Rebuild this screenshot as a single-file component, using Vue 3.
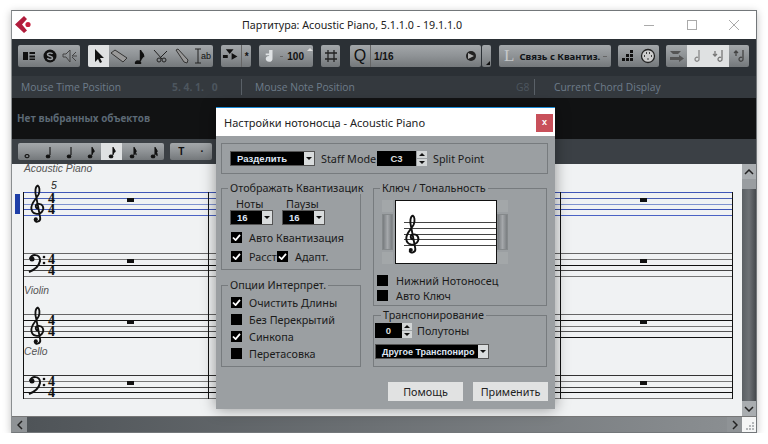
<script setup>
const blue = ['#3f56b8', '#4a5fb5', '#7f92cf', '#3f56b8', '#4a62c4']
const staves = [
  { clef: 'treble', lines: blue, label: 'Acoustic Piano', active: true },
  { clef: 'bass', lines: ['#666', '#777', '#111', '#444', '#777'], label: '' },
  { clef: 'treble', lines: ['#666', '#111', '#777', '#555', '#111'], label: 'Violin' },
  { clef: 'bass', lines: ['#333', '#777', '#444', '#111', '#777'], label: 'Cello' },
]
const notes = ['M5 9.5a2 1.6 0 1 0 .1 0z', 'M5 10a1.8 1.4 0 1 0 .1 0M7 10V2', 'M5 10a1.8 1.4 0 1 0 .1 0M7 10V2', 'M5 10a1.8 1.4 0 1 0 .1 0M7 10V2c0 2 3 3 2 5', 'M5 10a1.8 1.4 0 1 0 .1 0M7 10V2c0 2 3 3 2 5', 'M5 10a1.8 1.4 0 1 0 .1 0M7 10V2c0 2 3 3 2 5M7 5c0 2 3 3 2 5', 'M5 10a1.8 1.4 0 1 0 .1 0M7 10V2c0 2 3 3 2 5M7 5c0 2 3 3 2 5M7 7c0 2 3 2 2 4']
const interp = [
  { text: 'Очистить Длины', on: true },
  { text: 'Без Перекрытий', on: false },
  { text: 'Синкопа', on: true },
  { text: 'Перетасовка', on: false },
]
</script>

<template>
  <div class="window">
    <div class="titlebar">
      <svg class="logo" width="20" height="20" viewBox="0 0 20 20">
        <path d="M10 1L1 9.5 10 18l3-2.5-5-6 5-5.500z" fill="#b01c3c" />
        <circle cx="14" cy="9.500" r="2.600" fill="#c5203f" />
      </svg>
      <span class="wintitle">Партитура: Acoustic Piano, 5.1.1.0 - 19.1.1.0</span>
      <div class="caption">
        <svg width="12" height="12" viewBox="0 0 12 12"><path d="M1 6.500h10" stroke="#aaa" /></svg>
        <svg width="12" height="12" viewBox="0 0 12 12"><rect x="1.500" y="1.500" width="9" height="9" fill="none" stroke="#aaa" /></svg>
        <svg width="12" height="12" viewBox="0 0 12 12"><path d="M1 1l10 10M11 1L1 11" stroke="#aaa" /></svg>
      </div>
    </div>

    <div class="toolbar">
      <div class="tgroup" style="width: 62px">
        <svg class="ic" width="18" height="14" viewBox="0 0 18 14"><path d="M3 3h5v8H3zM9.500 3H15v2H9.500zM9.500 6.500H15v2H9.500zM9.500 9.500H15V11H9.500z" fill="#111" /></svg>
        <svg class="ic" width="16" height="16" viewBox="0 0 16 16"><circle cx="8" cy="8" r="6.500" fill="#111" /><path d="M10.500 6C10 4.500 5.500 4.500 5.500 6.500S10.500 8 10.500 10 6 12 5.500 10" stroke="#9a9ea2" stroke-width="1.500" fill="none" /></svg>
        <svg class="ic" width="16" height="16" viewBox="0 0 16 16"><path d="M8 2L4 6H1v3h3l4 5zM10 8l4-4M10 8h5M10 9l4 4" stroke="#444" fill="none" /></svg>
      </div>
      <div class="tgroup tools" style="width: 125px">
        <span class="cell on"><svg width="12" height="16" viewBox="0 0 12 16"><path d="M2 1v13l3-3 2 4 2-1-2-4h4z" fill="#111" /></svg></span>
        <span class="cell"><svg width="18" height="14" viewBox="0 0 18 14"><path d="M1 4l4-3 12 8-4 4z" fill="#999" stroke="#333" /></svg></span>
        <span class="cell"><svg width="12" height="16" viewBox="0 0 12 16"><path d="M4 13a2.500 2 0 1 0 .1 0M6.500 13V2c0 3 4 3 3 7" stroke="#111" stroke-width="1.400" fill="#111" /></svg></span>
        <span class="cell"><svg width="16" height="16" viewBox="0 0 16 16"><path d="M1 2l8 9M14 3L7 10" stroke="#222" fill="none" /><circle cx="6" cy="12" r="2" fill="none" stroke="#222" /><circle cx="11" cy="12" r="2" fill="none" stroke="#222" /></svg></span>
        <span class="cell"><svg width="16" height="16" viewBox="0 0 16 16"><path d="M2 2l2-1 10 11-1 3-3-1z" fill="#999" stroke="#333" /></svg></span>
        <span class="cell ab"><svg width="8" height="16" viewBox="0 0 8 16"><path d="M1 1h6M4 1v14M1 15h6" stroke="#222" fill="none" /></svg><i>ab</i></span>
      </div>
      <div class="tgroup split" style="width: 30px">
        <svg width="20" height="16" viewBox="0 0 20 16"><path d="M5 1h8l-4 5zM9 5v10M2 7h5v3H2zM11 5l6 3.500-6 3.500z" fill="#111" /></svg>
        <b class="star">*</b>
      </div>
      <div class="tgroup velo" style="width: 54px">
        <svg width="14" height="16" viewBox="0 0 14 16"><path d="M9 2v9a3 2.500 0 1 1-2-2V2zM2 6h4" stroke="#dfe2e4" stroke-width="2" fill="#dfe2e4" /></svg>
        <span class="dash"></span>
        <b>100</b>
        <span class="spinmarks"></span>
      </div>
      <div class="tgroup center" style="width: 19px">
        <svg width="14" height="14" viewBox="0 0 14 14"><path d="M4 1v12M10 1v12M1 4h12M1 10h12" stroke="#222" stroke-width="1.300" /></svg>
      </div>
      <div class="tgroup quant" style="width: 131px">
        <span class="q">Q</span>
        <b>1/16</b>
        <svg width="12" height="12" viewBox="0 0 12 12"><circle cx="6" cy="6" r="5" fill="#222" /><path d="M3 3l6 3-6 3z" fill="#aaa" /></svg>
      </div>
      <div class="tgroup small"><i></i></div>
      <div class="tgroup link" style="width: 112px">
        <span class="l">L</span>
        <b>Связь с Квантиз.</b>
        <span class="dash lk"></span>
      </div>
      <div class="tgroup hgroup" style="width: 41px">
        <svg class="ic" width="14" height="14" viewBox="0 0 14 14"><path d="M9 1h3v3H9zM5 5h3v3H5zM9 5h3v3H9zM1 9h3v3H1zM5 9h3v3H5zM9 9h3v3H9z" fill="#111" /></svg>
        <svg class="ic" width="16" height="16" viewBox="0 0 16 16"><circle cx="8" cy="8" r="6.500" fill="#ccc" stroke="#222" stroke-width="1.300" /><path d="M4 8h1M6 5h1M9 5h1M11 8h1M7.500 11h1" stroke="#111" stroke-width="1.500" /></svg>
      </div>
      <div class="tgroup nudge" style="width: 83px">
        <span class="cell w21"><svg width="16" height="14" viewBox="0 0 16 14"><path d="M1 2h11l-3 3H4zM1 8h9V6l5 3.500-5 3.500v-2H1z" fill="#555" /></svg></span>
        <span class="cell w21 on"><svg width="10" height="14" viewBox="0 0 10 14"><path d="M6 1v9a2 2 0 1 1-1-1.500" stroke="#888" stroke-width="1.300" fill="none" /></svg></span>
        <span class="cell w21 on"><svg width="14" height="14" viewBox="0 0 14 14"><path d="M10 1v9a2 2 0 1 1-1-1.500M3 2v5M1 5l2 2 2-2" stroke="#777" stroke-width="1.300" fill="none" /></svg></span>
        <span class="cell w21"><svg width="14" height="14" viewBox="0 0 14 14"><path d="M10 1v9a2 2 0 1 1-1-1.500M3 7V2M1 4l2-2 2 2" stroke="#444" stroke-width="1.300" fill="none" /></svg></span>
      </div>
    </div>

    <div class="inforow">
      <span class="w151">Mouse Time Position</span>
      <span class="pos">5. 4. 1.&nbsp;&nbsp;&nbsp;0</span>
      <span class="sep"></span>
      <span class="w261">Mouse Note Position</span>
      <span class="g8">G8</span>
      <span class="sep"></span>
      <span class="chord">Current Chord Display</span>
    </div>

    <div class="selection">Нет выбранных объектов</div>

    <div class="notebar">
      <div class="tgroup notes">
        <span v-for="(d, i) in notes" :key="i" class="ncell" :class="{ on: i === 4 }">
          <svg width="12" height="14" viewBox="0 0 12 14"><path :d="d" stroke="#111" stroke-width="1.100" :fill="i === 0 ? 'none' : '#111'" /></svg>
        </span>
      </div>
      <div class="tgroup tplet"><b>T</b><b>·</b></div>
    </div>

    <div class="scorearea">
      <div class="sheet">
        <div class="system">
          <span class="marker"></span>
          <span class="barnum">5</span>
          <span class="bar" style="left: 0"></span>
          <span class="bar" style="left: 185px"></span>
          <span class="bar" style="left: 537px"></span>
          <span class="bar" style="right: 0"></span>
          <div v-for="(s, i) in staves" :key="i" class="staff">
            <span v-if="s.label" class="partname" :class="{ first: i === 0 }">{{ s.label }}</span>
            <span v-for="(c, j) in s.lines" :key="j" class="line" :style="{ background: c }"></span>
            <svg v-if="s.clef === 'treble'" class="clef treble" width="18" height="40" viewBox="0 0 22 50">
              <path d="M13 31C9 31 8 26 12 25 18 24 21 30 17 35 13 39 5 38 4 31 3 24 10 19 13 13 15 8 14 3 12 2 9 3 8 9 10 16L15 42C16 47 9 49 8 45" fill="none" stroke="#111" stroke-width="2.300" />
              <circle cx="9.500" cy="44" r="2.500" fill="#111" />
            </svg>
            <svg v-else class="clef bass" width="20" height="20" viewBox="0 0 20 20">
              <path d="M2 6C2 1 13 0 12 8 11 13 6 17 1 19" fill="none" stroke="#111" stroke-width="2" />
              <circle cx="4" cy="6" r="2.500" fill="#111" /><circle cx="16" cy="4" r="1.300" fill="#111" /><circle cx="16" cy="10" r="1.300" fill="#111" />
            </svg>
            <span class="timesig">4<br />4</span>
            <span class="rest" style="left: 104px"></span>
            <span class="rest" style="left: 617px"></span>
          </div>
        </div>
      </div>
      <div class="vscroll">
        <span class="sbtn"><svg width="10" height="6" viewBox="0 0 10 6"><path d="M1 5l4-4 4 4" stroke="#222" stroke-width="1.500" fill="none" /></svg></span>
        <span class="vthumb"></span>
        <span class="vtrack"></span>
        <span class="sbtn"><svg width="10" height="6" viewBox="0 0 10 6"><path d="M1 1l4 4 4-4" stroke="#222" stroke-width="1.500" fill="none" /></svg></span>
      </div>
    </div>

    <div class="hscroll">
      <span class="hbtn"><svg width="6" height="10" viewBox="0 0 6 10"><path d="M5 1L1 5l4 4" stroke="#222" stroke-width="1.500" fill="none" /></svg></span>
      <span class="htrack"></span>
      <span class="hbtn"><svg width="6" height="10" viewBox="0 0 6 10"><path d="M1 1l4 4-4 4" stroke="#222" stroke-width="1.500" fill="none" /></svg></span>
      <span class="corner"><svg width="8" height="8" viewBox="0 0 8 8"><path d="M6 0h2v2H6zM3 3h2v2H3zM6 3h2v2H6zM0 6h2v2H0zM3 6h2v2H3zM6 6h2v2H6z" fill="#b4b7b9" /></svg></span>
    </div>
  </div>

  <div class="dialog">
    <div class="dlgtitle">
      <span>Настройки нотоносца - Acoustic Piano</span>
      <span class="close">x</span>
    </div>
    <div class="dlgbody">
      <div class="box modebox">
        <span class="select mode"><b>Разделить</b><i class="arrow"></i></span>
        <span class="t stafflabel">Staff Mode</span>
        <span class="field c3">C3</span>
        <span class="spin"><i></i><i></i></span>
        <span class="t splitlabel">Split Point</span>
      </div>

      <div class="columns">
        <div class="leftcol">
          <fieldset class="box quantbox">
            <legend>Отображать Квантизацик</legend>
            <div class="heads"><span>Ноты</span><span>Паузы</span></div>
            <div class="selects">
              <span class="select num"><b>16</b><i class="arrow"></i></span>
              <span class="select num"><b>16</b><i class="arrow"></i></span>
            </div>
            <div class="check"><span class="cb"><svg width="9" height="7" viewBox="0 0 10 8"><path d="M1 4l3 3 5-6" stroke="#fff" stroke-width="2" fill="none" /></svg></span>Авто Квантизация</div>
            <div class="check tight">
              <span class="cb"><svg width="9" height="7" viewBox="0 0 10 8"><path d="M1 4l3 3 5-6" stroke="#fff" stroke-width="2" fill="none" /></svg></span>
              <span class="rasst">Расст</span>
              <span class="cb"><svg width="9" height="7" viewBox="0 0 10 8"><path d="M1 4l3 3 5-6" stroke="#fff" stroke-width="2" fill="none" /></svg></span>
              Адапт.
            </div>
          </fieldset>
          <fieldset class="box interpbox">
            <legend>Опции Интерпрет.</legend>
            <div v-for="o in interp" :key="o.text" class="check row17">
              <span class="cb"><svg v-if="o.on" width="9" height="7" viewBox="0 0 10 8"><path d="M1 4l3 3 5-6" stroke="#fff" stroke-width="2" fill="none" /></svg></span>{{ o.text }}
            </div>
          </fieldset>
        </div>

        <div class="rightcol">
          <fieldset class="box clefbox">
            <legend>Ключ / Тональность</legend>
            <div class="clefpick">
              <div class="minibar"><i class="up"></i><i class="thumb"></i><i class="up"></i></div>
              <div class="preview">
                <svg class="pclef" width="18" height="43" viewBox="0 0 22 50">
                  <path d="M13 31C9 31 8 26 12 25 18 24 21 30 17 35 13 39 5 38 4 31 3 24 10 19 13 13 15 8 14 3 12 2 9 3 8 9 10 16L15 42C16 47 9 49 8 45" fill="none" stroke="#111" stroke-width="2.300" />
                  <circle cx="9.500" cy="44" r="2.500" fill="#111" />
                </svg>
                <span v-for="n in 5" :key="n" class="pline"></span>
              </div>
              <div class="minibar"><i class="up"></i><i class="thumb"></i><i class="up"></i></div>
            </div>
            <div class="check low"><span class="cb"></span>Нижний Нотоносец</div>
            <div class="check low"><span class="cb"></span>Авто Ключ</div>
          </fieldset>
          <fieldset class="box transbox">
            <legend>Транспонирование</legend>
            <div class="semis">
              <span class="field zero">0</span>
              <span class="spin"><i></i><i></i></span>
              <span class="t">Полутоны</span>
            </div>
            <span class="select other"><b>Другое Транспониро</b><i class="arrow"></i></span>
          </fieldset>
        </div>
      </div>

      <div class="buttons">
        <button class="btn">Помощь</button>
        <button class="btn">Применить</button>
      </div>
    </div>
  </div>
</template>

<style>
html, body {
  margin: 0;
  background: #fff;
  overflow: hidden;
}
</style>

<style scoped>
.window {
  box-sizing: border-box;
  position: relative;
  width: 746px;
  height: 423px;
  margin: 10px 0 0 11px;
  border: 1px solid #73777a;
  border-left-color: #8a8e90;
  display: flex;
  flex-direction: column;
  box-shadow: 0 2px 8px rgba(0, 0, 0, 0.25);
  font-family: "Open Sans", sans-serif;
}
.titlebar {
  height: 28px;
  background: #fff;
  display: flex;
  align-items: center;
  position: relative;
  flex: none;
  padding-left: 230px;
}
.logo {
  position: absolute;
  left: 2px;
  top: 4px;
}
.wintitle {
  font-family: "Noto Sans", sans-serif;
  font-size: 10.700px;
  color: #222;
}
.caption {
  position: absolute;
  right: 16px;
  top: 8px;
  display: flex;
  gap: 30.500px;
}
.toolbar {
  height: 37px;
  flex: none;
  box-sizing: border-box;
  background: #2b3035;
  padding: 6px 0 0 6px;
  display: flex;
  gap: 8px;
}
.tgroup {
  height: 22px;
  border-radius: 2px;
  background: linear-gradient(#a3a7aa, #8e9295 50%, #74787b);
  display: flex;
  align-items: center;
  justify-content: space-around;
  overflow: hidden;
  flex: none;
  font-family: "Liberation Sans", sans-serif;
  font-size: 10px;
  color: #111;
}
.cell {
  height: 100%;
  flex: 1;
  display: flex;
  align-items: center;
  justify-content: center;
}
.cell.on {
  background: #dfe1e2;
}
.ab i {
  font-style: normal;
  font-size: 9px;
  margin-left: -1px;
}
.tools .cell.on {
  flex: none;
  width: 21px;
}
.split {
  justify-content: flex-start;
}
.star {
  border-left: 1px solid #666;
  height: 100%;
  width: 9px;
  text-align: center;
  line-height: 24px;
  margin-left: 1px;
}
.velo {
  justify-content: flex-start;
  padding-left: 5px;
  box-sizing: border-box;
  position: relative;
}
.velo b {
  margin-left: 4px;
}
.dash {
  width: 4px;
  height: 1px;
  background: #666;
  margin-left: 4px;
}
.dash.lk {
  margin-left: 3px;
}
.spinmarks {
  width: 0;
  height: 0;
  margin-left: 3px;
  border-left: 3px solid transparent;
  border-right: 3px solid transparent;
  border-bottom: 3px solid #ddd;
  align-self: flex-start;
  margin-top: 3px;
}
.center {
  justify-content: center;
}
.quant {
  justify-content: flex-start;
  box-sizing: border-box;
  padding-right: 4px;
  margin-left: 2px;
  margin-right: -7px;
}
.q {
  width: 20px;
  height: 100%;
  border-right: 1px solid #666;
  font-size: 16px;
  line-height: 22px;
  text-align: center;
  margin-right: 3px;
}
.quant b {
  flex: 1;
}
.small {
  width: 9px;
  position: relative;
}
.small i {
  position: absolute;
  right: 1px;
  bottom: 2px;
  border-left: 4px solid transparent;
  border-bottom: 4px solid #111;
}
.link {
  justify-content: flex-start;
}
.l {
  font-family: "Liberation Serif", serif;
  font-size: 17px;
  color: #c4c7c9;
  margin: 0 5px 0 5px;
}
.link b {
  font-family: "Noto Sans", sans-serif;
  font-size: 9.500px;
  white-space: nowrap;
  color: #101418;
}
.hgroup {
  margin-left: -1px;
}
.nudge {
  justify-content: flex-start;
  margin-left: -1px;
}
.w21 {
  flex: none;
  width: 21px;
}
.inforow {
  height: 22px;
  flex: none;
  background: #34393e;
  display: flex;
  align-items: center;
  font-size: 10.300px;
  color: #6e7c8a;
  position: relative;
}
.w151 {
  margin-left: 9px;
  width: 151px;
}
.pos {
  width: 69px;
  color: #4d565e;
  font-weight: 700;
}
.sep {
  width: 1px;
  height: 16px;
  background: #5a6168;
}
.w261 {
  margin-left: 13px;
  width: 261px;
}
.g8 {
  width: 18px;
  color: #4d565e;
}
.chord {
  margin-left: 19px;
}
.selection {
  height: 41px;
  flex: none;
  box-sizing: border-box;
  background: #111213;
  color: #5c6975;
  font-size: 9.900px;
  font-weight: 700;
  padding: 13px 0 0 5px;
}
.notebar {
  height: 25px;
  flex: none;
  background: #3b4045;
  padding: 4px 0 0 6px;
  box-sizing: border-box;
  display: flex;
  gap: 6px;
}
.notebar .tgroup {
  height: 17px;
}
.notes {
  width: 146px;
}
.ncell {
  width: 21px;
  height: 100%;
  display: flex;
  align-items: center;
  justify-content: center;
}
.ncell.on {
  background: #dfe1e2;
}
.tplet {
  width: 42px;
}
.scorearea {
  flex: 1;
  display: flex;
  min-height: 0;
}
.sheet {
  flex: 1;
  background: #f0f2f3;
  position: relative;
  padding: 28px 0 0 11px;
  box-sizing: border-box;
}
.system {
  position: relative;
  width: 710px;
  display: flex;
  flex-direction: column;
  gap: 37px;
}
.marker {
  position: absolute;
  left: -8px;
  top: 2px;
  width: 5px;
  height: 20px;
  background: #1e3fa8;
}
.barnum {
  position: absolute;
  left: 28px;
  top: -13px;
  font: italic 10.500px "Liberation Sans", sans-serif;
  color: #222;
}
.bar {
  position: absolute;
  top: 0;
  bottom: 0;
  width: 1px;
  background: #111;
  z-index: 1;
}
.staff {
  position: relative;
  height: 24px;
  display: flex;
  flex-direction: column;
  justify-content: space-between;
}
.line {
  height: 1px;
}
.partname {
  position: absolute;
  left: 1px;
  top: -29px;
  font: italic 10.300px "Liberation Sans", sans-serif;
  color: #555;
}
.partname.first {
  left: 1px;
  top: -29px;
}
.clef {
  position: absolute;
}
.treble {
  left: 5px;
  top: -8px;
}
.bass {
  left: 5px;
  top: 0;
}
.timesig {
  position: absolute;
  left: 25px;
  top: 1px;
  font: 700 14px/11px "Liberation Serif", serif;
  color: #111;
}
.rest {
  position: absolute;
  top: 6px;
  width: 7px;
  height: 4px;
  background: #111;
}
.vscroll {
  width: 14px;
  flex: none;
  display: flex;
  flex-direction: column;
  background: #555;
}
.sbtn {
  height: 15px;
  flex: none;
  background: #a9adb0;
  display: flex;
  align-items: center;
  justify-content: center;
}
.vthumb {
  height: 10px;
  flex: none;
  background: #999da0;
}
.vtrack {
  flex: 1;
  background: linear-gradient(90deg, #5b6064, #6e7276 50%, #45494d);
}
.hscroll {
  height: 16px;
  flex: none;
  display: flex;
  border-top: 1px solid #777;
  box-sizing: border-box;
}
.hbtn {
  width: 15px;
  flex: none;
  background: #8f9396;
  display: flex;
  align-items: center;
  justify-content: center;
}
.htrack {
  flex: 1;
  background: linear-gradient(90deg, #4f5458, #8a8e91);
}
.corner {
  width: 14px;
  flex: none;
  background: #f4f5f5;
  display: flex;
  align-items: flex-end;
  justify-content: flex-end;
  padding: 0 2px 2px 0;
  box-sizing: border-box;
}

.dialog {
  position: absolute;
  left: 216px;
  top: 107px;
  width: 339px;
  height: 302px;
  background: #9b9fa2;
  box-shadow: 0 0 14px rgba(0, 0, 0, 0.4);
  font-family: "Noto Sans", sans-serif;
  font-size: 10.800px;
  color: #1a1a1a;
  z-index: 5;
}
.dlgtitle {
  height: 29px;
  box-sizing: border-box;
  background: #fff;
  border-top: 1px solid #1a8ad4;
  display: flex;
  align-items: center;
  justify-content: space-between;
  padding: 1px 2px 0 8px;
  font-size: 11px;
  color: #222;
}
.close {
  width: 17px;
  height: 18px;
  background: #c8505a;
  color: #fff;
  font: 700 9px/17px "Liberation Sans", sans-serif;
  text-align: center;
}
.dlgbody {
  padding: 7px 7px 0 5px;
}
.box {
  border: 1px solid #777b7e;
  margin: 0;
  padding: 0;
  box-sizing: border-box;
  min-width: 0;
}
legend {
  padding: 0 2px;
  line-height: 12px;
  white-space: nowrap;
}
.modebox {
  height: 31px;
  display: flex;
  align-items: center;
  padding-left: 8px;
}
.select {
  background: #000;
  color: #fff;
  display: flex;
  align-items: center;
  box-sizing: border-box;
  font-family: "Liberation Sans", sans-serif;
  font-size: 9.500px;
  border: 1px solid #555;
  position: relative;
}
.select b {
  flex: 1;
  overflow: hidden;
  white-space: nowrap;
  padding-left: 6px;
  color: #dfe6f4;
}
.arrow {
  width: 10px;
  height: 100%;
  flex: none;
  background: #d9dcdd;
  position: relative;
}
.arrow::after {
  content: "";
  position: absolute;
  left: 2px;
  top: 5px;
  border-left: 3px solid transparent;
  border-right: 3px solid transparent;
  border-top: 3px solid #111;
}
.mode {
  width: 85px;
  height: 15px;
}
.stafflabel {
  margin-left: 6px;
  width: 56px;
  white-space: nowrap;
}
.field {
  background: #000;
  color: #ddd;
  font: 700 9.500px "Liberation Sans", sans-serif;
  text-align: center;
  box-sizing: border-box;
}
.c3 {
  width: 39px;
  height: 15px;
  line-height: 15px;
  margin-right: 1px;
}
.spin {
  width: 10px;
  height: 15px;
  display: flex;
  flex-direction: column;
  gap: 1px;
  flex: none;
}
.spin i {
  flex: 1;
  background: #d2d5d6;
  position: relative;
}
.spin i:first-child::after,
.spin i:last-child::after {
  content: "";
  position: absolute;
  left: 2px;
  top: 2px;
  border-left: 3px solid transparent;
  border-right: 3px solid transparent;
}
.spin i:first-child::after {
  border-bottom: 3px solid #111;
}
.spin i:last-child::after {
  border-top: 3px solid #111;
}
.splitlabel {
  margin-left: 6px;
}
.columns {
  display: flex;
  gap: 12px;
  margin-top: 8px;
}
.leftcol {
  width: 140px;
  flex: none;
}
.rightcol {
  width: 174px;
  flex: none;
}
.quantbox {
  height: 88px;
  padding-left: 8px;
}
.quantbox legend {
  margin-left: -2px;
}
.heads {
  display: flex;
  padding-left: 6px;
  margin-top: 3px;
  line-height: 13px;
}
.heads span:first-child {
  width: 50px;
}
.selects {
  display: flex;
  gap: 9px;
}
.num {
  width: 43px;
  height: 15px;
}
.check {
  display: flex;
  align-items: center;
  white-space: nowrap;
  height: 18px;
  margin-top: 3px;
}
.check.tight {
  margin-top: 1px;
}
.cb {
  width: 11px;
  height: 11px;
  background: #000;
  flex: none;
  margin-right: 7px;
  display: flex;
  align-items: center;
  justify-content: center;
}
.quantbox .check {
  margin-left: 1px;
}
.rasst {
  width: 28px;
  overflow: hidden;
}
.interpbox {
  height: 88px;
  margin-top: 9px;
  padding-left: 9px;
}
.interpbox legend {
  margin-left: -3px;
}
.row17 {
  height: 17px;
  margin-top: 0;
}
.interpbox .row17:first-of-type {
  margin-top: 3px;
}
.clefbox {
  height: 124px;
  padding: 0 0 0 3px;
}
.clefbox legend {
  margin-left: 3px;
}
.clefpick {
  display: flex;
  margin-left: 5px;
  margin-top: 6px;
  height: 64px;
}
.minibar {
  width: 11px;
  display: flex;
  flex-direction: column;
  gap: 2px;
}
.minibar:first-child {
  margin-right: 2px;
}
.minibar .up {
  height: 12px;
  background: #a3a7a9;
}
.minibar .thumb {
  flex: 1;
  background: linear-gradient(90deg, #777b7e, #a5a8ab, #7a7e81);
  border: 1px solid #85898b;
}
.preview {
  width: 102px;
  height: 64px;
  box-sizing: border-box;
  background: #fff;
  border: 1px solid #111;
  display: flex;
  flex-direction: column;
  justify-content: center;
  gap: 4.800px;
  padding: 4px 0 0 8px;
  position: relative;
}
.pclef {
  position: absolute;
  left: 7px;
  top: 12px;
}
.pline {
  height: 1px;
  background: #444;
}
.low {
  margin: 0;
  height: 15px;
}
.clefpick + .low {
  margin-top: 9px;
}
.low .cb {
  margin-right: 8px;
}
.transbox {
  height: 58px;
  margin-top: 3px;
  padding-left: 1px;
}
.transbox legend {
  margin-left: 6px;
}
.semis {
  display: flex;
  align-items: center;
  height: 15px;
  margin-top: 2px;
}
.zero {
  width: 27px;
  height: 15px;
  line-height: 15px;
}
.semis .t {
  margin-left: 5px;
}
.other {
  width: 114px;
  height: 15px;
  margin-top: 6px;
}
.other b {
  padding-left: 6px;
  font-size: 9px;
}
.buttons {
  display: flex;
  justify-content: flex-end;
  gap: 10px;
  margin-top: 15px;
}
.btn {
  width: 75px;
  height: 19px;
  border: 0;
  background: #e1e2e2;
  font: 10.800px "Noto Sans", sans-serif;
  color: #222;
  padding: 0;
}
</style>
